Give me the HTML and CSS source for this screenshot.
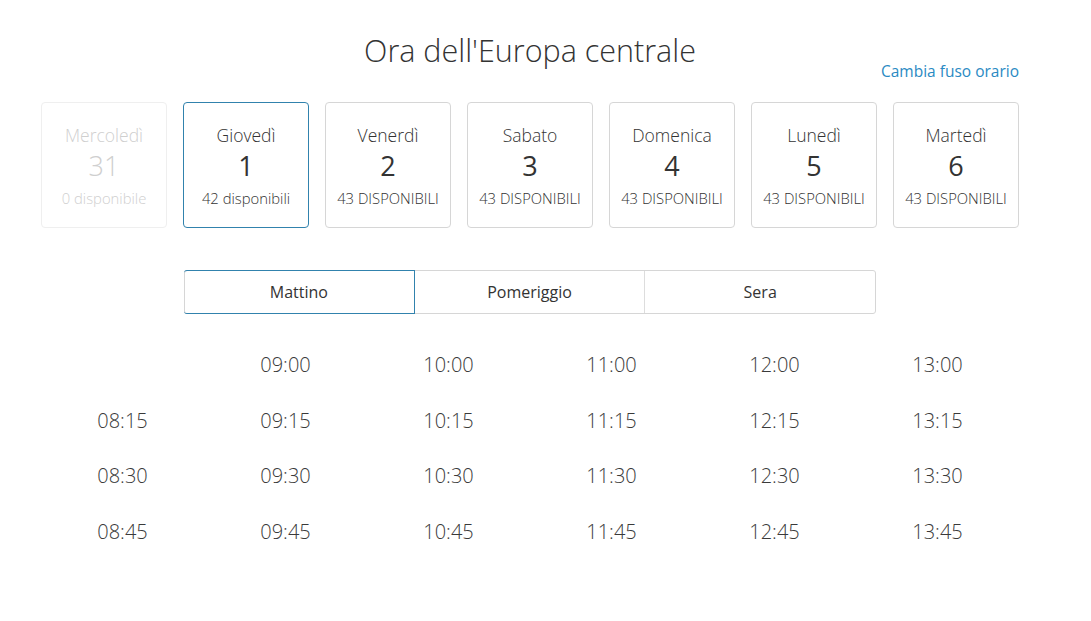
FILE: index.html
```html
<!DOCTYPE html>
<html lang="it">
<head>
<meta charset="utf-8">
<title>Ora dell'Europa centrale</title>
<link rel="stylesheet" href="styles.css">
</head>
<body>
<div class="page">
  <header class="head">
    <h1 class="title">Ora dell'Europa centrale</h1>
    <div class="tz"><a class="tz-link" href="#">Cambia fuso orario</a></div>
  </header>

  <div class="days">
    <div class="day day-off">
      <div class="day-name">Mercoledì</div>
      <div class="day-num">31</div>
      <div class="day-avail">0 disponibile</div>
    </div>
    <div class="day day-on">
      <div class="day-name">Giovedì</div>
      <div class="day-num">1</div>
      <div class="day-avail">42 disponibili</div>
    </div>
    <div class="day">
      <div class="day-name">Venerdì</div>
      <div class="day-num">2</div>
      <div class="day-avail">43 DISPONIBILI</div>
    </div>
    <div class="day">
      <div class="day-name">Sabato</div>
      <div class="day-num">3</div>
      <div class="day-avail">43 DISPONIBILI</div>
    </div>
    <div class="day">
      <div class="day-name">Domenica</div>
      <div class="day-num">4</div>
      <div class="day-avail">43 DISPONIBILI</div>
    </div>
    <div class="day">
      <div class="day-name">Lunedì</div>
      <div class="day-num">5</div>
      <div class="day-avail">43 DISPONIBILI</div>
    </div>
    <div class="day">
      <div class="day-name">Martedì</div>
      <div class="day-num">6</div>
      <div class="day-avail">43 DISPONIBILI</div>
    </div>
  </div>

  <div class="tabs">
    <div class="tab tab-on">Mattino</div>
    <div class="tab">Pomeriggio</div>
    <div class="tab">Sera</div>
  </div>

  <div class="times">
    <div class="time empty"></div>
    <div class="time">09:00</div>
    <div class="time">10:00</div>
    <div class="time">11:00</div>
    <div class="time">12:00</div>
    <div class="time">13:00</div>

    <div class="time">08:15</div>
    <div class="time">09:15</div>
    <div class="time">10:15</div>
    <div class="time">11:15</div>
    <div class="time">12:15</div>
    <div class="time">13:15</div>

    <div class="time">08:30</div>
    <div class="time">09:30</div>
    <div class="time">10:30</div>
    <div class="time">11:30</div>
    <div class="time">12:30</div>
    <div class="time">13:30</div>

    <div class="time">08:45</div>
    <div class="time">09:45</div>
    <div class="time">10:45</div>
    <div class="time">11:45</div>
    <div class="time">12:45</div>
    <div class="time">13:45</div>
  </div>
</div>
</body>
</html>
```

FILE: styles.css
```css
html, body {
  margin: 0;
  padding: 0;
  background: #ffffff;
}

body {
  font-family: "Open Sans", "Liberation Sans", sans-serif;
  color: #333333;
}

.page {
  width: 978px;
  margin-left: 41px;
}

.head {
  display: flex;
  flex-direction: column;
}

.title {
  margin: 30px 0 0 0;
  font-size: 30.5px;
  font-weight: 300;
  line-height: 40px;
  text-align: center;
  color: #333333;
}

.tz {
  margin-top: -9px;
  text-align: right;
  line-height: 20px;
}

.tz-link {
  font-size: 15.5px;
  color: #2a8ac3;
  text-decoration: none;
}

.days {
  margin-top: 21px;
  display: flex;
  gap: 16px;
}

.day {
  box-sizing: border-box;
  width: 126px;
  height: 126px;
  border: 1px solid #d6d6d6;
  border-radius: 4px;
  padding-top: 21px;
  text-align: center;
  color: #333333;
  font-weight: 300;
}

.day-on {
  border-color: #3182ad;
}

.day-off {
  border-color: #efefef;
  color: #cfcfcf;
}

.day-name {
  font-size: 17.5px;
  line-height: 22px;
}

.day-num {
  margin-top: 2px;
  font-size: 27px;
  line-height: 36px;
  font-weight: 400;
}

.day-off .day-num {
  font-weight: 300;
}

.day-avail {
  margin-top: 4px;
  font-size: 14.8px;
  line-height: 20px;
}

.tabs {
  margin: 42px auto 0;
  width: 692px;
  height: 44px;
  display: flex;
  box-sizing: border-box;
  border: 1px solid #d6d6d6;
  border-radius: 3px;
}

.tab {
  flex: 1;
  display: flex;
  align-items: center;
  justify-content: center;
  font-size: 16px;
  color: #333333;
  border-left: 1px solid #dddddd;
}

.tab:first-child {
  border-left: none;
}

.tab-on {
  margin: -1px 0 -1px -1px;
  border: 1px solid #3182ad;
  border-radius: 3px 0 0 3px;
}

.tab-on + .tab {
  border-left: none;
}

.times {
  margin-top: 23px;
  display: grid;
  grid-template-columns: repeat(6, 163px);
  grid-auto-rows: 55.5px;
}

.time {
  display: flex;
  align-items: center;
  justify-content: center;
  font-size: 20px;
  font-weight: 300;
  color: #3a3a3a;
}
```
